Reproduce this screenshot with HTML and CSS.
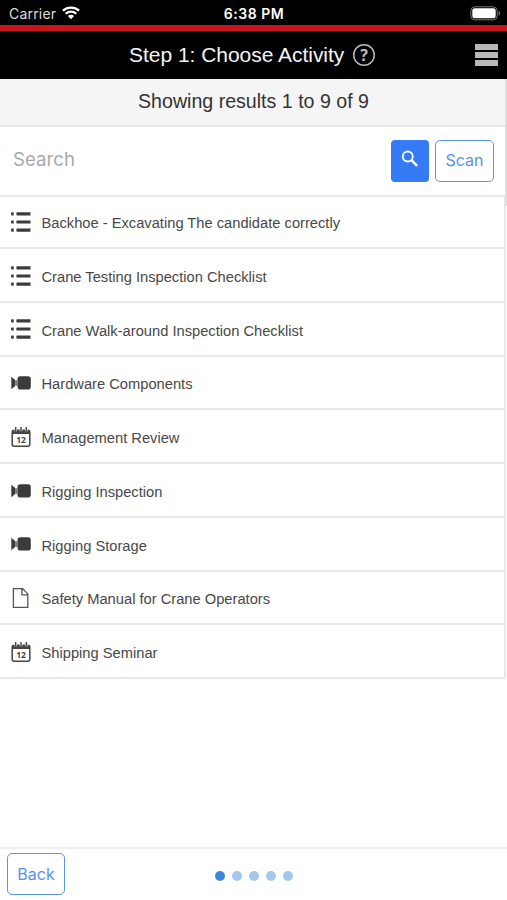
FILE: index.html
```html
<!DOCTYPE html>
<html lang="en">
<head>
<meta charset="utf-8">
<title>Choose Activity</title>
<link rel="stylesheet" href="styles.css">
</head>
<body>
<svg class="defs" width="0" height="0">
  <symbol id="list" viewBox="0 0 20 20"><path fill="#3b3b3b" d="M.7.2h2v3.2h-2C-.2 3.4-.2.2.7.2zM6 .2h13.5v3.2H6C5.1 3.4 5.1.2 6 .2zM.7 8.4h2v3.2h-2c-.9 0-.9-3.2 0-3.2zM6 8.4h13.5v3.2H6c-.9 0-.9-3.2 0-3.2zM.7 16.5h2v3.2h-2c-.9 0-.9-3.2 0-3.2zM6 16.5h13.5v3.2H6c-.9 0-.9-3.2 0-3.2z"/></symbol>
  <symbol id="video" viewBox="0 0 20 20"><rect x="6.5" y="3.3" width="13.3" height="13.2" rx="2.8" fill="#3b3b3b"/><path fill="#3b3b3b" d="M.3 3.8 4.2 7v6L.3 16.2z"/><path fill="#777" d="M4.2 7.2h2.3v5.6H4.2z"/></symbol>
  <symbol id="calendar" viewBox="0 0 20 20"><rect x="1.2" y="3.2" width="17.6" height="16" rx="2" fill="#fff" stroke="#444" stroke-width="1.5"/><path fill="#444" d="M1 3h18v4H1z"/><path d="M4.7.3v4M10 .3v4M15.3.3v4" stroke="#fff" stroke-width="2.6"/><path d="M4.7 0v4.5M10 0v4.5M15.3 0v4.5" stroke="#444" stroke-width="1.4"/></symbol>
  <symbol id="file" viewBox="0 0 20 20"><path d="M2.4.7h9.3l5.1 5.2v13.4H2.4zM10.9.7v6.2h5.9" fill="none" stroke="#555" stroke-width="1.3"/></symbol>
</svg>
<div class="status">
  <div class="carrier"><span>Carrier</span><svg width="18" height="14" viewBox="0 0 18 14"><path d="M.9 4.6C5.4.5 12.6.5 17.1 4.6M3.7 7.7c3-2.8 7.6-2.8 10.6 0" fill="none" stroke="#fff" stroke-width="2.2"/><path fill="#fff" d="M5.9 10c1.8-1.6 4.4-1.6 6.2 0L9 13.2z"/></svg></div>
  <div class="time">6:38 PM</div>
  <svg class="battery" width="31" height="15" viewBox="0 0 31 15"><rect x=".8" y=".8" width="26.4" height="13" rx="4" fill="none" stroke="#777"/><rect x="2.3" y="2.3" width="23.4" height="10" rx="2.4" fill="#fff"/><path d="M28.7 4.8c2 1 2 4 0 5z" fill="#777"/></svg>
</div>
<header class="header">
  <h1>Step 1: Choose Activity</h1>
  <svg class="help" width="24" height="24" viewBox="0 0 24 24"><circle cx="12" cy="12" r="10.3" fill="none" stroke="#bbb" stroke-width="1.5"/><text x="12" y="17.7" text-anchor="middle" class="question">?</text></svg>
  <div class="menu"><i></i><i></i><i></i></div>
</header>
<div class="results"><span>Showing results 1 to 9 of 9</span></div>
<div class="search">
  <span class="hint">Search</span>
  <div class="find"><svg width="18" height="18" viewBox="0 0 18 18"><circle cx="6.8" cy="6.5" r="5" fill="none" stroke="#fff" stroke-width="1.8"/><path d="m10.4 10.2 5.7 5.7" stroke="#fff" stroke-width="2.5"/></svg></div>
  <div class="button scan">Scan</div>
</div>
<ul class="activities">
  <li><svg><use href="#list"/></svg><span>Backhoe - Excavating The candidate correctly</span></li>
  <li><svg><use href="#list"/></svg><span>Crane Testing Inspection Checklist</span></li>
  <li><svg><use href="#list"/></svg><span>Crane Walk-around Inspection Checklist</span></li>
  <li><svg><use href="#video"/></svg><span>Hardware Components</span></li>
  <li><svg><use href="#calendar"/><text x="10" y="15.9" text-anchor="middle" class="day">12</text></svg><span>Management Review</span></li>
  <li><svg><use href="#video"/></svg><span>Rigging Inspection</span></li>
  <li><svg><use href="#video"/></svg><span>Rigging Storage</span></li>
  <li><svg><use href="#file"/></svg><span>Safety Manual for Crane Operators</span></li>
  <li><svg><use href="#calendar"/><text x="10" y="15.9" text-anchor="middle" class="day">12</text></svg><span>Shipping Seminar</span></li>
</ul>
<footer class="footer">
  <div class="button back">Back</div>
  <div class="dots"><i class="current"></i><i></i><i></i><i></i><i></i></div>
</footer>
<div class="scrollbar"></div>
</body>
</html>
```

FILE: styles.css
```css
* { box-sizing: border-box; }
body {
  margin: 0;
  width: 507px;
  height: 900px;
  display: flex;
  flex-direction: column;
  position: relative;
  overflow: hidden;
  background: #fff;
  color: #484848;
  font-family: "Liberation Sans", Arial, sans-serif;
}
.defs { position: absolute; }
.status {
  height: 25px;
  flex: none;
  display: grid;
  grid-template-columns: 1fr auto 1fr;
  align-items: center;
  padding: 2px 6px 0 9px;
  background: #000;
  color: #fff;
  font: 14px/20px Inter, sans-serif;
}
.carrier { display: flex; align-items: center; gap: 6px; color: #ddd; letter-spacing: .2px; }
.carrier svg { margin-top: -2px; }
.time { font-weight: 600; font-size: 14px; letter-spacing: .5px; margin-right: 2px; }
.battery { justify-self: end; margin-top: -1px; }
.header {
  height: 54px;
  flex: none;
  display: flex;
  align-items: center;
  padding: 0 9px 1px 129px;
  border-top: 6px solid #c9141f;
  background: #000;
  color: #f5f5f5;
}
h1 { margin: 0; padding-top: 1px; font-size: 21px; letter-spacing: -.03px; font-weight: 400; line-height: 26px; white-space: nowrap; }
.help { margin-left: 8px; margin-top: 1px; }
.question { font: 700 16px "Open Sans", sans-serif; fill: #bbb; }
.menu { margin-left: auto; width: 23px; display: grid; gap: 2px; }
.menu i { height: 6px; background: #b8b8b8; }
.results {
  height: 48px;
  flex: none;
  padding-top: 9px;
  text-align: center;
  background: #f5f5f5;
  border-bottom: 2px solid #e6e6e6;
  color: #333;
  font-size: 19.6px;
  line-height: 26px;
}
.search {
  height: 68px;
  flex: none;
  display: flex;
  padding: 13px 13px 0;
}
.hint { flex: 1; color: #aaa; font: 18.7px/39px Inter, sans-serif; }
.find {
  width: 38px;
  height: 42px;
  display: flex;
  align-items: center;
  justify-content: center;
  padding-bottom: 4px;
  border-radius: 4px;
  background: #367bf6;
}
.button {
  height: 42px;
  border: 1.5px solid #5b94ef;
  border-radius: 5px;
  background: #fff;
  color: #5791f3;
  text-align: center;
  font: 16px/39px Inter, sans-serif;
}
.scan { width: 59px; margin-left: 6px; }
.back { width: 58px; line-height: 40px; }
.activities {
  width: 506px;
  margin: 0;
  padding: 0;
  list-style: none;
  border-top: 2px solid #e8e8e8;
  border-right: 2px solid #e8e8e8;
}
.activities li {
  height: 53.75px;
  display: flex;
  align-items: center;
  gap: 11px;
  padding-left: 10.5px;
  border-bottom: 2px solid #e8e8e8;
  font-size: 14.7px;
}
.activities li:first-child { height: 52px; }
.activities svg { width: 20px; height: 20px; flex: none; margin-top: 1.5px; }
.activities span { padding-top: 4px; white-space: nowrap; }
.activities li:first-child svg { margin-top: 0; }
.activities li:first-child span { padding-top: 2px; }
.day { font: 700 8.5px "Open Sans", sans-serif; fill: #444; }
.footer {
  height: 53px;
  flex: none;
  margin-top: auto;
  border-top: 2px solid #f0f0f0;
  padding: 4px 7px;
  display: grid;
  grid-template-columns: 1fr auto 1fr;
  align-items: start;
}
.dots { display: flex; gap: 7px; padding-top: 18px; }
.dots i { width: 10px; height: 10px; border-radius: 50%; background: #a5c6ee; }
.dots .current { background: #4085e0; }
.scrollbar { position: absolute; right: 0; top: 79px; width: 2px; height: 127px; background: #dedede; }
```
